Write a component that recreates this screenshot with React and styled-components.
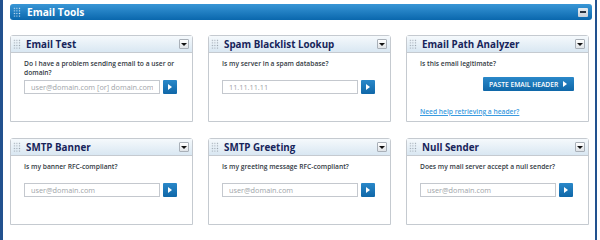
import React from 'react'
import styled, { createGlobalStyle } from 'styled-components';

const Global = createGlobalStyle`
body {
  margin: 0;
  background: #fff;
  font-family: "Open Sans", "DejaVu Sans", sans-serif;
}
`;

const Frame = styled.div`
width: 597px;
height: 240px;
box-sizing: border-box;
border-left: 3px solid #22518e;
border-right: 2px solid #22518e;
padding: 4px 3px 0 7px;
`;

const TopBar = styled.div`
height: 16px;
display: flex;
align-items: center;
padding: 0 4px 0 3px;
border-radius: 3px;
background: linear-gradient(#3896d6, #0a67ad);
color: #fff;
font-weight: 700;
font-size: 10.2px;
gap: 6px;
`;

const Grip = styled.span`
width: 8px;
height: 10px;
flex: none;
background-image: radial-gradient(circle, ${p => p.$light ? 'rgba(255,255,255,0.85)' : '#9aa3ad'} 0.6px, transparent 0.9px);
background-size: 2.6px 2.6px;
`;

const Title = styled.span`
flex: 1;
`;

const Minus = styled.span`
width: 10px;
height: 9px;
border-radius: 1px;
background: linear-gradient(#e8ecf0, #c9d0d8);
display: flex;
align-items: center;
justify-content: center;
&::after {
  content: '';
  width: 6px;
  height: 2px;
  background: #2a3440;
}
`;

const Grid = styled.div`
display: grid;
grid-template-columns: repeat(3, 183px);
column-gap: 15px;
row-gap: 16px;
margin-top: 15px;
`;

const Card = styled.div`
height: 87px;
box-sizing: border-box;
border: 1px solid #c5cad0;
border-radius: 3px 3px 0 0;
display: flex;
flex-direction: column;
`;

const CardHead = styled.div`
height: 16px;
flex: none;
display: flex;
align-items: center;
gap: 5px;
padding: 0 3px 0 2px;
background: linear-gradient(#f5f9fc, #d9e7f2);
border-bottom: 1px solid #c5cad0;
color: #17245a;
font-weight: 700;
font-size: 9.8px;
`;

const Drop = styled.span`
width: 10px;
height: 10px;
box-sizing: border-box;
border: 1px solid #a9b0b8;
border-radius: 1px;
background: linear-gradient(#fff, #dfe3e7);
display: flex;
align-items: center;
justify-content: center;
&::after {
  content: '';
  border-left: 3px solid transparent;
  border-right: 3px solid transparent;
  border-top: 3.5px solid #111;
}
`;

const Body = styled.div`
padding: 6px 14px 0 13px;
display: flex;
flex-direction: column;
`;

const Question = styled.p`
margin: 0;
font-size: 6.7px;
line-height: 9px;
font-weight: 600;
color: #333a44;
`;

const Row = styled.div`
display: flex;
gap: 3px;
margin-top: ${p => p.$gap}px;
`;

const Input = styled.input`
width: 136px;
height: 14px;
box-sizing: border-box;
border: 1px solid #c4c8ce;
padding: 0 6px;
font-family: inherit;
font-size: 7.3px;
color: #888;
outline: none;
&::placeholder { color: #a0a4a8; }
`;

const Go = styled.button`
width: 14px;
height: 14px;
padding: 0;
border: none;
border-radius: 1px;
background: linear-gradient(#2a88c9, #0f67a8);
display: flex;
align-items: center;
justify-content: center;
&::after {
  content: '';
  border-top: 3px solid transparent;
  border-bottom: 3px solid transparent;
  border-left: 4px solid #fff;
}
`;

const PasteBtn = styled.button`
margin: 9px 0 0 63px;
align-self: flex-start;
width: 91px;
height: 14px;
padding: 0 0 0 6px;
border: none;
border-radius: 1px;
background: linear-gradient(#2a88c9, #0f67a8);
color: #fff;
font-family: inherit;
font-size: 6.7px;
font-weight: 600;
display: flex;
align-items: center;
gap: 5px;
&::after {
  content: '';
  border-top: 3px solid transparent;
  border-bottom: 3px solid transparent;
  border-left: 4px solid #fff;
}
`;

const Help = styled.a`
margin-top: 16px;
font-size: 6.7px;
font-weight: 600;
color: #3b9be0;
text-decoration: underline;
align-self: flex-start;
`;

const tools = [
  { title: 'Email Test', q: 'Do I have a problem sending email to a user or domain?', ph: 'user@domain.com [or] domain.com', gap: 3 },
  { title: 'Spam Blacklist Lookup', q: 'Is my server in a spam database?', ph: '11.11.11.11', gap: 12 },
  { title: 'Email Path Analyzer', q: 'Is this email legitimate?', paste: true },
  { title: 'SMTP Banner', q: 'Is my banner RFC-compliant?', ph: 'user@domain.com', gap: 12 },
  { title: 'SMTP Greeting', q: 'Is my greeting message RFC-compliant?', ph: 'user@domain.com', gap: 12 },
  { title: 'Null Sender', q: 'Does my mail server accept a null sender?', ph: 'user@domain.com', gap: 12 },
];

const App = () => {
  return (
    <Frame>
      <Global />
      <TopBar>
        <Grip $light />
        <Title>Email Tools</Title>
        <Minus />
      </TopBar>
      <Grid>
        {tools.map(t => (
          <Card key={t.title}>
            <CardHead>
              <Grip />
              <Title>{t.title}</Title>
              <Drop />
            </CardHead>
            <Body>
              <Question>{t.q}</Question>
              {t.paste ? (
                <>
                  <PasteBtn>PASTE EMAIL HEADER</PasteBtn>
                  <Help href="#">Need help retrieving a header?</Help>
                </>
              ) : (
                <Row $gap={t.gap}>
                  <Input placeholder={t.ph} />
                  <Go />
                </Row>
              )}
            </Body>
          </Card>
        ))}
      </Grid>
    </Frame>
  )
}
export default App
